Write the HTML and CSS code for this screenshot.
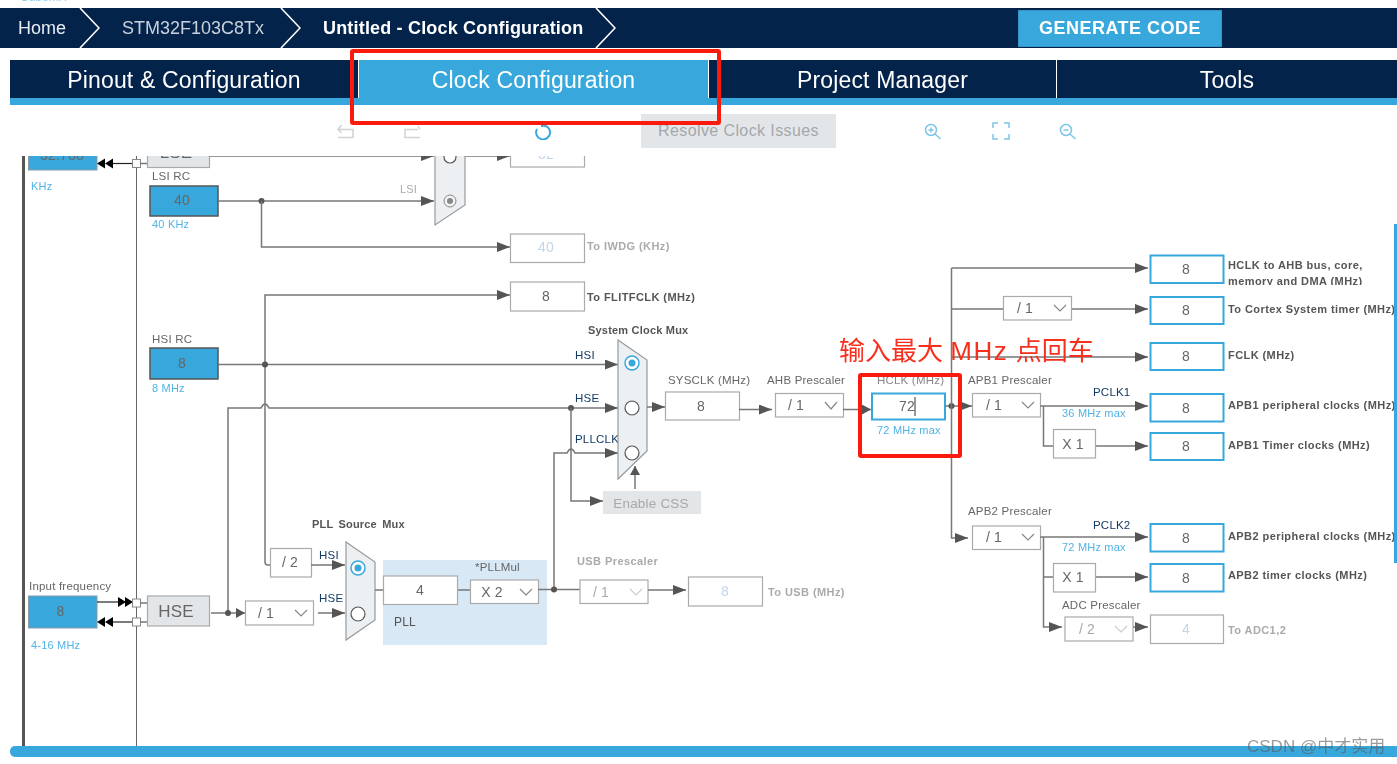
FILE: index.html
```html
<!DOCTYPE html>
<html lang="en">
<head>
  <meta charset="UTF-8">
  <title>Untitled - Clock Configuration</title>
  <link rel="stylesheet" href="styles.css">
</head>
<body>
<div class="page">
  <div class="top-cut"><span>CubeMX</span></div>

  <header class="crumbs">
    <span class="crumb crumb-home">Home</span>
    <svg class="chev" viewBox="0 0 21 40"><path d="M1 0 L20 20 L1 40"/></svg>
    <span class="crumb crumb-mcu">STM32F103C8Tx</span>
    <svg class="chev" viewBox="0 0 21 40"><path d="M1 0 L20 20 L1 40"/></svg>
    <span class="crumb crumb-current">Untitled - Clock Configuration</span>
    <svg class="chev" viewBox="0 0 21 40"><path d="M1 0 L20 20 L1 40"/></svg>
    <button class="generate">GENERATE CODE</button>
  </header>

  <nav class="tabs">
    <a class="tab">Pinout &amp; Configuration</a>
    <a class="tab active">Clock Configuration</a>
    <a class="tab">Project Manager</a>
    <a class="tab">Tools</a>
  </nav>

  <div class="toolbar">
    <svg class="tool tool-undo" viewBox="0 0 18 18"><path d="M5.500 3 L2 7.500 L5.500 11 M2 7.500 H17 V15.500 H2"/></svg>
    <svg class="tool tool-redo" viewBox="0 0 18 18"><path d="M15 4 L17 7.500 M15 7.500 H2 V15.500 H17"/></svg>
    <svg class="tool tool-refresh" viewBox="0 0 18 18"><path d="M8 3.500 A7 7 0 1 1 3 7 M8 1.500 V5"/></svg>
    <button class="resolve">Resolve Clock Issues</button>
    <svg class="tool tool-zoomin" viewBox="0 0 18 18"><circle cx="7" cy="8" r="5.500"/><path d="M11 12 L16.500 17 M4.500 8 H9.500 M7 5.500 V10.500"/></svg>
    <svg class="tool tool-fit" viewBox="0 0 18 18"><path d="M6 1 H1 V6 M12 1 H17 V6 M6 17 H1 V12 M12 17 H17 V12"/></svg>
    <svg class="tool tool-zoomout" viewBox="0 0 18 18"><circle cx="7" cy="8" r="5.500"/><path d="M11 12 L16.500 17 M4.500 8 H9.500"/></svg>
  </div>

  <svg class="diagram" viewBox="0 156 1397 590">
    <defs>
      <marker id="arr" markerUnits="userSpaceOnUse" markerWidth="13" markerHeight="10" refX="13" refY="5" orient="auto">
        <path d="M0 0 L13 5 L0 10 Z" fill="#555"/>
      </marker>
      <marker id="arr-s" markerUnits="userSpaceOnUse" markerWidth="9" markerHeight="10" refX="9" refY="5" orient="auto">
        <path d="M0 0 L9 5 L0 10 Z" fill="#555"/>
      </marker>
    </defs>

    <!-- rails -->
    <path class="rail" d="M23.5 156 V746"/>
    <path class="wire-thin" d="M136.500 156 V746"/>

    <!-- LSE (cut off by the toolbar) -->
    <rect class="box-src" x="28.500" y="140" width="68.500" height="30"/>
    <text class="val" x="62" y="160">32.768</text>
    <path class="wire-black" d="M113 163.500 H132"/>
    <path class="tri" d="M105 158.500 L97 163.500 L105 168.500 Z M113 158.500 L105 163.500 L113 168.500 Z"/>
    <rect class="pin" x="132.500" y="159.500" width="8" height="8"/>
    <rect class="box-grey" x="147.500" y="140" width="62" height="27.500"/>
    <text class="big-lse" x="176" y="158">LSE</text>
    <path class="wire" d="M140 163.500 H147"/>
    <path class="wire" d="M209 156 H434" marker-end="url(#arr)"/>
    <path class="wire" d="M465 156 H510" marker-end="url(#arr)"/>
    <rect class="box" x="510.500" y="140" width="74" height="27"/>
    <text class="val-off" x="546" y="159">32</text>

    <!-- LSI mux -->
    <path class="mux" d="M435 140 V225 L465 205 V140 Z"/>
    <circle class="radio" cx="450" cy="157" r="6"/>
    <circle class="radio-grey" cx="450" cy="201" r="6"/>
    <circle class="radio-grey-dot" cx="450" cy="201" r="3"/>

    <text class="note" x="31" y="190">KHz</text>

    <!-- LSI -->
    <text class="lbl" x="152" y="180">LSI RC</text>
    <rect class="box-src dark" x="150" y="186" width="68" height="30"/>
    <text class="val" x="182" y="205">40</text>
    <text class="note" x="152" y="228">40 KHz</text>
    <path class="wire" d="M218 201 H434" marker-end="url(#arr)"/>
    <circle class="dot" cx="261.500" cy="201" r="3"/>
    <path class="wire" d="M261.500 201 V247 H510" marker-end="url(#arr)"/>
    <text class="lbl-off" x="400" y="193">LSI</text>
    <rect class="box" x="510.500" y="234" width="74" height="28.500"/>
    <text class="val-off" x="546" y="252">40</text>
    <text class="out-off" x="587" y="250">To IWDG (KHz)</text>

    <!-- FLITFCLK -->
    <path class="wire" d="M270 565 H268 Q265 565 265 562 V295 H510" marker-end="url(#arr)"/>
    <rect class="box" x="510.500" y="282" width="74" height="29"/>
    <text class="val" x="546" y="301">8</text>
    <text class="out" x="587" y="301">To FLITFCLK (MHz)</text>

    <!-- HSI -->
    <text class="lbl" x="152" y="343">HSI RC</text>
    <rect class="box-src dark" x="150" y="348" width="68" height="31"/>
    <text class="val" x="182" y="368">8</text>
    <text class="note" x="152" y="392">8 MHz</text>
    <path class="wire" d="M218 364.500 H618" marker-end="url(#arr)"/>
    <circle class="dot" cx="265" cy="364.500" r="3"/>

    <!-- HSE line to system mux -->
    <path class="wire" d="M228 613 V408 H261 Q265 400 269 408 H618" marker-end="url(#arr)"/>
    <circle class="dot" cx="571" cy="408" r="3"/>
    <path class="wire" d="M571 408 V501 H603" marker-end="url(#arr)"/>
    <path class="wire" d="M554 590 V453 H567 Q571 445 575 453 H618" marker-end="url(#arr)"/>
    <text class="sig" x="575" y="359">HSI</text>
    <text class="sig" x="575" y="402">HSE</text>
    <text class="sig" x="575" y="443">PLLCLK</text>

    <!-- system clock mux -->
    <text class="title" x="588" y="334">System Clock Mux</text>
    <path class="mux" d="M618 340 L647 360 V451 L618 479 Z"/>
    <circle class="radio-on" cx="632" cy="363" r="7"/>
    <circle class="radio-dot" cx="632" cy="363" r="3.500"/>
    <circle class="radio" cx="632" cy="408" r="7"/>
    <circle class="radio" cx="632" cy="453" r="7"/>
    <path class="wire" d="M635 489 V466" marker-end="url(#arr-s)"/>
    <rect class="btn-off" x="603" y="491" width="98" height="23"/>
    <text class="btn-off-text" x="651" y="508">Enable CSS</text>

    <path class="wire" d="M647 407 H665" marker-end="url(#arr)"/>
    <text class="lbl" x="668" y="384">SYSCLK (MHz)</text>
    <rect class="box" x="665.500" y="392" width="74" height="28"/>
    <text class="val" x="701" y="411">8</text>
    <path class="wire" d="M739 409.500 H772" marker-end="url(#arr)"/>

    <text class="lbl" x="767" y="384">AHB Prescaler</text>
    <rect class="box" x="775.500" y="393.500" width="68" height="23.500"/>
    <text class="val" x="796" y="410">/ 1</text>
    <path class="chevron" d="M825 402 L831 409 L837 402"/>
    <path class="wire" d="M843 409.500 H871" marker-end="url(#arr-s)"/>

    <text class="lbl-dim" x="877" y="384">HCLK (MHz)</text>
    <rect class="box-out" x="872" y="393.500" width="73" height="26"/>
    <text class="val" x="907" y="411">72</text>
    <path class="caret" d="M915 397 V416"/>
    <text class="note" x="877" y="434">72 MHz max</text>

    <!-- HCLK bus -->
    <path class="wire" d="M945 406 H972" marker-end="url(#arr)"/>
    <circle class="dot" cx="951.500" cy="406" r="3"/>
    <path class="wire" d="M951.500 268 V538 H968" marker-end="url(#arr)"/>
    <path class="wire" d="M951.500 268 H1148" marker-end="url(#arr)"/>
    <path class="wire" d="M951.500 309 H1003"/>
    <path class="wire" d="M1071 309 H1148" marker-end="url(#arr)"/>
    <path class="wire" d="M951.500 357 H1148" marker-end="url(#arr)"/>

    <rect class="box" x="1003.500" y="296.500" width="68" height="23.500"/>
    <text class="val" x="1025" y="313">/ 1</text>
    <path class="chevron" d="M1054 305 L1060 311 L1066 305"/>

    <!-- APB1 -->
    <text class="lbl" x="968" y="384">APB1 Prescaler</text>
    <rect class="box" x="972.500" y="393.500" width="68" height="23.500"/>
    <text class="val" x="994" y="410">/ 1</text>
    <path class="chevron" d="M1022 402 L1028 408 L1034 402"/>
    <path class="wire" d="M1040 406 H1148" marker-end="url(#arr)"/>
    <path class="wire" d="M1043.500 406 V446 H1053"/>
    <path class="wire" d="M1095 446 H1148" marker-end="url(#arr)"/>
    <rect class="box" x="1053.500" y="429.500" width="42" height="28.500"/>
    <text class="val" x="1073" y="449">X 1</text>
    <text class="sig" x="1093" y="396">PCLK1</text>
    <text class="note" x="1062" y="417">36 MHz max</text>

    <!-- APB2 -->
    <text class="lbl" x="968" y="515">APB2 Prescaler</text>
    <rect class="box" x="972.500" y="526" width="68" height="23.500"/>
    <text class="val" x="994" y="542">/ 1</text>
    <path class="chevron" d="M1022 534 L1028 540 L1034 534"/>
    <path class="wire" d="M1040 537 H1148" marker-end="url(#arr)"/>
    <path class="wire" d="M1043.500 537 V627 H1062" marker-end="url(#arr)"/>
    <path class="wire" d="M1043.500 577 H1053"/>
    <path class="wire" d="M1095 577 H1148" marker-end="url(#arr)"/>
    <rect class="box" x="1053.500" y="563.500" width="42" height="28.500"/>
    <text class="val" x="1073" y="582">X 1</text>
    <text class="sig" x="1093" y="529">PCLK2</text>
    <text class="note" x="1062" y="551">72 MHz max</text>
    <text class="lbl" x="1062" y="609">ADC Prescaler</text>
    <rect class="box" x="1065" y="617" width="68" height="24"/>
    <text class="val-dim" x="1087" y="634">/ 2</text>
    <path class="chevron off" d="M1115 626 L1121 632 L1127 626"/>
    <path class="wire" d="M1133 627 H1148" marker-end="url(#arr)"/>

    <!-- outputs -->
    <rect class="box-out" x="1150.500" y="255.500" width="73" height="27.500"/>
    <text class="val" x="1186" y="274">8</text>
    <rect class="box-out" x="1150.500" y="297" width="73" height="27"/>
    <text class="val" x="1186" y="315">8</text>
    <rect class="box-out" x="1150.500" y="343" width="73" height="27"/>
    <text class="val" x="1186" y="361">8</text>
    <rect class="box-out" x="1150.500" y="394" width="73" height="27.500"/>
    <text class="val" x="1186" y="413">8</text>
    <rect class="box-out" x="1150.500" y="433" width="73" height="27"/>
    <text class="val" x="1186" y="451">8</text>
    <rect class="box-out" x="1150.500" y="524" width="73" height="27.500"/>
    <text class="val" x="1186" y="543">8</text>
    <rect class="box-out" x="1150.500" y="564" width="73" height="27.500"/>
    <text class="val" x="1186" y="583">8</text>
    <rect class="box" x="1150.500" y="615" width="73" height="28.500"/>
    <text class="val-off" x="1186" y="634">4</text>

    <text class="out" x="1228" y="269">HCLK to AHB bus, core,</text>
    <text class="out" x="1228" y="285">memory and DMA (MHz)</text>
    <rect class="mask" x="1226" y="285" width="171" height="8"/>
    <text class="out" x="1228" y="313">To Cortex System timer (MHz)</text>
    <text class="out" x="1228" y="359">FCLK (MHz)</text>
    <text class="out" x="1228" y="409">APB1 peripheral clocks (MHz)</text>
    <text class="out" x="1228" y="449">APB1 Timer clocks (MHz)</text>
    <text class="out" x="1228" y="540">APB2 peripheral clocks (MHz)</text>
    <text class="out" x="1228" y="579">APB2 timer clocks (MHz)</text>
    <text class="out-off" x="1228" y="634">To ADC1,2</text>

    <!-- HSE input -->
    <text class="lbl" x="29" y="590">Input frequency</text>
    <rect class="box-src" x="28.500" y="596" width="68.500" height="32"/>
    <text class="val" x="60.500" y="616">8</text>
    <path class="wire-black" d="M97 602 H118"/>
    <path class="tri" d="M118 597 L126 602 L118 607 Z M125 597 L133 602 L125 607 Z"/>
    <path class="wire-black" d="M113 622 H132"/>
    <path class="tri" d="M105 617 L97 622 L105 627 Z M113 617 L105 622 L113 627 Z"/>
    <rect class="pin" x="132.500" y="599" width="8" height="8"/>
    <rect class="pin" x="132.500" y="618" width="8" height="8"/>
    <path class="wire" d="M140 603 H147 M140 622 H147"/>
    <rect class="box-grey" x="147.500" y="596" width="62" height="30"/>
    <text class="big" x="176" y="617">HSE</text>
    <text class="note" x="31" y="649">4-16 MHz</text>
    <path class="wire" d="M211 613 H245" marker-end="url(#arr-s)"/>
    <circle class="dot" cx="228" cy="613" r="3"/>
    <rect class="box" x="245.500" y="601" width="68" height="24"/>
    <text class="val" x="266" y="618">/ 1</text>
    <path class="chevron" d="M295 610 L301 616 L307 610"/>
    <path class="wire" d="M318 613 H345" marker-end="url(#arr)"/>

    <!-- PLL source -->
    <rect class="box" x="270.500" y="548.500" width="41" height="28.500"/>
    <text class="val" x="290" y="567">/ 2</text>
    <path class="wire" d="M311 565 H345" marker-end="url(#arr)"/>
    <text class="sig" x="319" y="559">HSI</text>
    <text class="sig" x="319" y="602">HSE</text>
    <text class="title pll-title" x="312" y="528">PLL Source Mux</text>

    <rect class="pll-area" x="383" y="560" width="164" height="85"/>
    <path class="mux" d="M346 542 L375 562 V620 L346 640 Z"/>
    <circle class="radio-on" cx="358" cy="568" r="7"/>
    <circle class="radio-dot" cx="358" cy="568" r="3.500"/>
    <circle class="radio" cx="358" cy="614" r="7"/>
    <path class="wire" d="M375 590 H384 M457 590 H470"/>
    <rect class="box" x="383.500" y="576" width="74" height="28.500"/>
    <text class="val" x="420" y="595">4</text>
    <text class="lbl" x="475" y="571">*PLLMul</text>
    <rect class="box" x="470.500" y="580" width="68" height="23.500"/>
    <text class="val" x="492" y="597">X 2</text>
    <path class="chevron" d="M520 589 L526 595 L532 589"/>
    <text class="lbl-plain" x="394" y="626">PLL</text>
    <path class="wire" d="M538 589.500 H580"/>
    <circle class="dot" cx="554" cy="589.500" r="3"/>

    <!-- USB -->
    <text class="out-off" x="577" y="565">USB Prescaler</text>
    <rect class="box" x="580" y="580" width="68" height="23.500"/>
    <text class="val-dim" x="601" y="597">/ 1</text>
    <path class="chevron off" d="M630 589 L636 595 L642 589"/>
    <path class="wire" d="M648 590 H686" marker-end="url(#arr)"/>
    <rect class="box" x="688.500" y="577" width="74" height="29"/>
    <text class="val-off" x="725" y="596">8</text>
    <text class="out-off" x="768" y="596">To USB (MHz)</text>
  </svg>

  <div class="hscroll"></div>
  <div class="vscroll"></div>

  <div class="mark mark-tab"></div>
  <div class="mark mark-hclk"></div>
  <div class="annotation">输入最大 <span class="annotation-latin">MHz</span> 点回车</div>
  <div class="watermark">CSDN @中才实用</div>
</div>
</body>
</html>
```

FILE: styles.css
```css
html, body {
  margin: 0;
  overflow: hidden;
}
body {
  background: white;
  font-family: "Liberation Sans", Arial, sans-serif;
}
.page {
  position: relative;
  width: 1397px;
  height: 764px;
  overflow: hidden;
  filter: blur(0.35px);
}

/* leftovers of the window title, only the bottom is visible */
.top-cut {
  height: 8px;
  overflow: hidden;
  padding-left: 20px;
  color: #8fd0ee;
  font-size: 12px;
}
.top-cut span {
  display: block;
  margin-top: -10px;
}

/* breadcrumb */
.crumbs {
  display: flex;
  align-items: center;
  height: 40px;
  background: #03234b;
  color: #e8edf2;
}
.crumb {
  font-size: 18px;
  white-space: nowrap;
}
.crumb-home { margin-left: 18px; width: 61px; }
.crumb-mcu { margin-left: 22px; width: 158px; color: #c9d2dc; }
.crumb-current { margin-left: 22px; width: 272px; font-weight: bold; color: white; letter-spacing: 0.18px; }
.chev {
  width: 21px;
  height: 40px;
  flex: none;
}
.chev path {
  fill: none;
  stroke: white;
  stroke-width: 1.6;
}
.generate {
  width: 204px;
  height: 37px;
  margin-left: 402px;
  padding: 0;
  background: #38a8dc;
  border: 1px solid #2f95c8;
  color: white;
  font-family: inherit;
  font-size: 18px;
  font-weight: bold;
  letter-spacing: 0.5px;
}

/* main tabs */
.tabs {
  display: grid;
  grid-template-columns: 348px 350px 348px 1fr;
  height: 38px;
  margin: 12px 0 0 10px;
  background: #03234b;
  border-bottom: 7px solid #38a8dc;
}
.tab {
  display: flex;
  align-items: center;
  justify-content: center;
  padding-top: 2px;
  color: white;
  font-size: 23px;
  letter-spacing: 0.15px;
  border-left: 1px solid white;
}
.tab:first-child { border-left: none; }
.tab.active { background: #38a8dc; }

/* toolbar */
.toolbar {
  display: flex;
  align-items: center;
  height: 51px;
}
.tool {
  width: 18px;
  height: 18px;
  flex: none;
  fill: none;
  stroke: #7cc5e8;
  stroke-width: 1.5;
}
.tool-undo { margin-left: 336px; stroke: #cfd3d6; }
.tool-redo { margin-left: 49px; stroke: #cfd3d6; }
.tool-refresh { margin-left: 113px; stroke: #38a8dc; stroke-width: 2; }
.tool-zoomin { margin-left: 88px; }
.tool-fit { margin-left: 50px; }
.tool-zoomout { margin-left: 49px; }
.resolve {
  width: 195px;
  height: 34px;
  margin-left: 89px;
  padding: 0;
  background: #e3e6e9;
  border: none;
  color: #a4a8ac;
  font-family: inherit;
  font-size: 16px;
  letter-spacing: 0.4px;
}

/* clock tree */
.diagram {
  display: block;
  width: 1397px;
  height: 590px;
}
.diagram text {
  font-size: 11px;
  letter-spacing: 0.2px;
}
.rail { stroke: #555; stroke-width: 3; fill: none; }
.wire { stroke: #777; stroke-width: 1.5; fill: none; }
.wire-thin { stroke: #666; stroke-width: 1; fill: none; }
.wire-black { stroke: #222; stroke-width: 1.2; fill: none; }
.tri { fill: black; }
.dot { fill: #555; }
.pin { fill: white; stroke: #888; }
.mux { fill: #ecf0f3; stroke: #999; stroke-width: 1.2; }
.radio { fill: white; stroke: #555; stroke-width: 1.2; }
.radio-on { fill: white; stroke: #38a8dc; stroke-width: 1.5; }
.radio-dot { fill: #38a8dc; }
.radio-grey { fill: #f2f2f2; stroke: #888; }
.radio-grey-dot { fill: #888; }
.box { fill: white; stroke: #aaa; stroke-width: 1.2; }
.box-src { fill: #38a8dc; stroke: #8a9aa6; stroke-width: 1; }
.box-src.dark { stroke: #555; stroke-width: 1.5; }
.box-grey { fill: #e3e6e9; stroke: #aaa; stroke-width: 1.2; }
.box-out { fill: white; stroke: #38a8dc; stroke-width: 2; }
.btn-off { fill: #e3e6e9; }
.pll-area { fill: #d9e8f5; }
.mask { fill: white; }
.caret { stroke: #333; stroke-width: 1; }
.chevron { fill: none; stroke: #888; stroke-width: 1.2; }
.chevron.off { stroke: #ccc; }

.diagram .val, .diagram .val-off, .diagram .val-dim, .diagram .big, .diagram .big-lse, .diagram .btn-off-text {
  text-anchor: middle;
}
.diagram .val { fill: #666; font-size: 14px; }
.diagram .val-off { fill: #c3d6ea; font-size: 14px; }
.diagram .val-dim { fill: #aaa; font-size: 14px; }
.diagram .big, .diagram .big-lse { fill: #666; font-size: 17px; }
.diagram .btn-off-text { fill: #a8a8a8; font-size: 13.5px; }
.diagram .note { fill: #4fb3e6; }
.diagram .lbl { fill: #666; font-size: 11.5px; }
.diagram .lbl-dim { fill: #888; font-size: 11.5px; }
.diagram .lbl-plain { fill: #555; font-size: 12px; }
.diagram .lbl-off { fill: #aaa; }
.diagram .sig { fill: #143a66; font-size: 11.5px; }
.diagram .title { fill: #555; font-weight: bold; }
.diagram .pll-title { word-spacing: 2px; }
.diagram .out { fill: #555; font-weight: bold; letter-spacing: 0.42px; }
.diagram .out-off { fill: #aaa; font-weight: bold; letter-spacing: 0.42px; }

.hscroll {
  height: 11px;
  margin-left: 10px;
  background: #38a8dc;
  border-radius: 5px 0 0 5px;
}
.vscroll {
  position: absolute;
  right: 0;
  top: 224px;
  width: 3px;
  height: 339px;
  background: #38a8dc;
}

/* red marks drawn over the screenshot */
.mark {
  position: absolute;
  border: 4px solid #fa1a0e;
  border-radius: 3px;
  box-sizing: border-box;
}
.mark-tab { left: 350px; top: 49px; width: 371px; height: 76px; }
.mark-hclk { left: 858px; top: 373px; width: 104px; height: 85px; }
.annotation {
  position: absolute;
  left: 839px;
  top: 330px;
  color: #f7301e;
  font-family: "Liberation Sans", "Noto Sans CJK SC", sans-serif;
  font-size: 26px;
  white-space: nowrap;
}
.annotation-latin { letter-spacing: 1.6px; }
.watermark {
  position: absolute;
  left: 1247px;
  top: 732px;
  color: rgba(90, 90, 90, 0.6);
  font-family: "Liberation Sans", "Noto Sans CJK SC", sans-serif;
  font-size: 17px;
  white-space: nowrap;
}
```
